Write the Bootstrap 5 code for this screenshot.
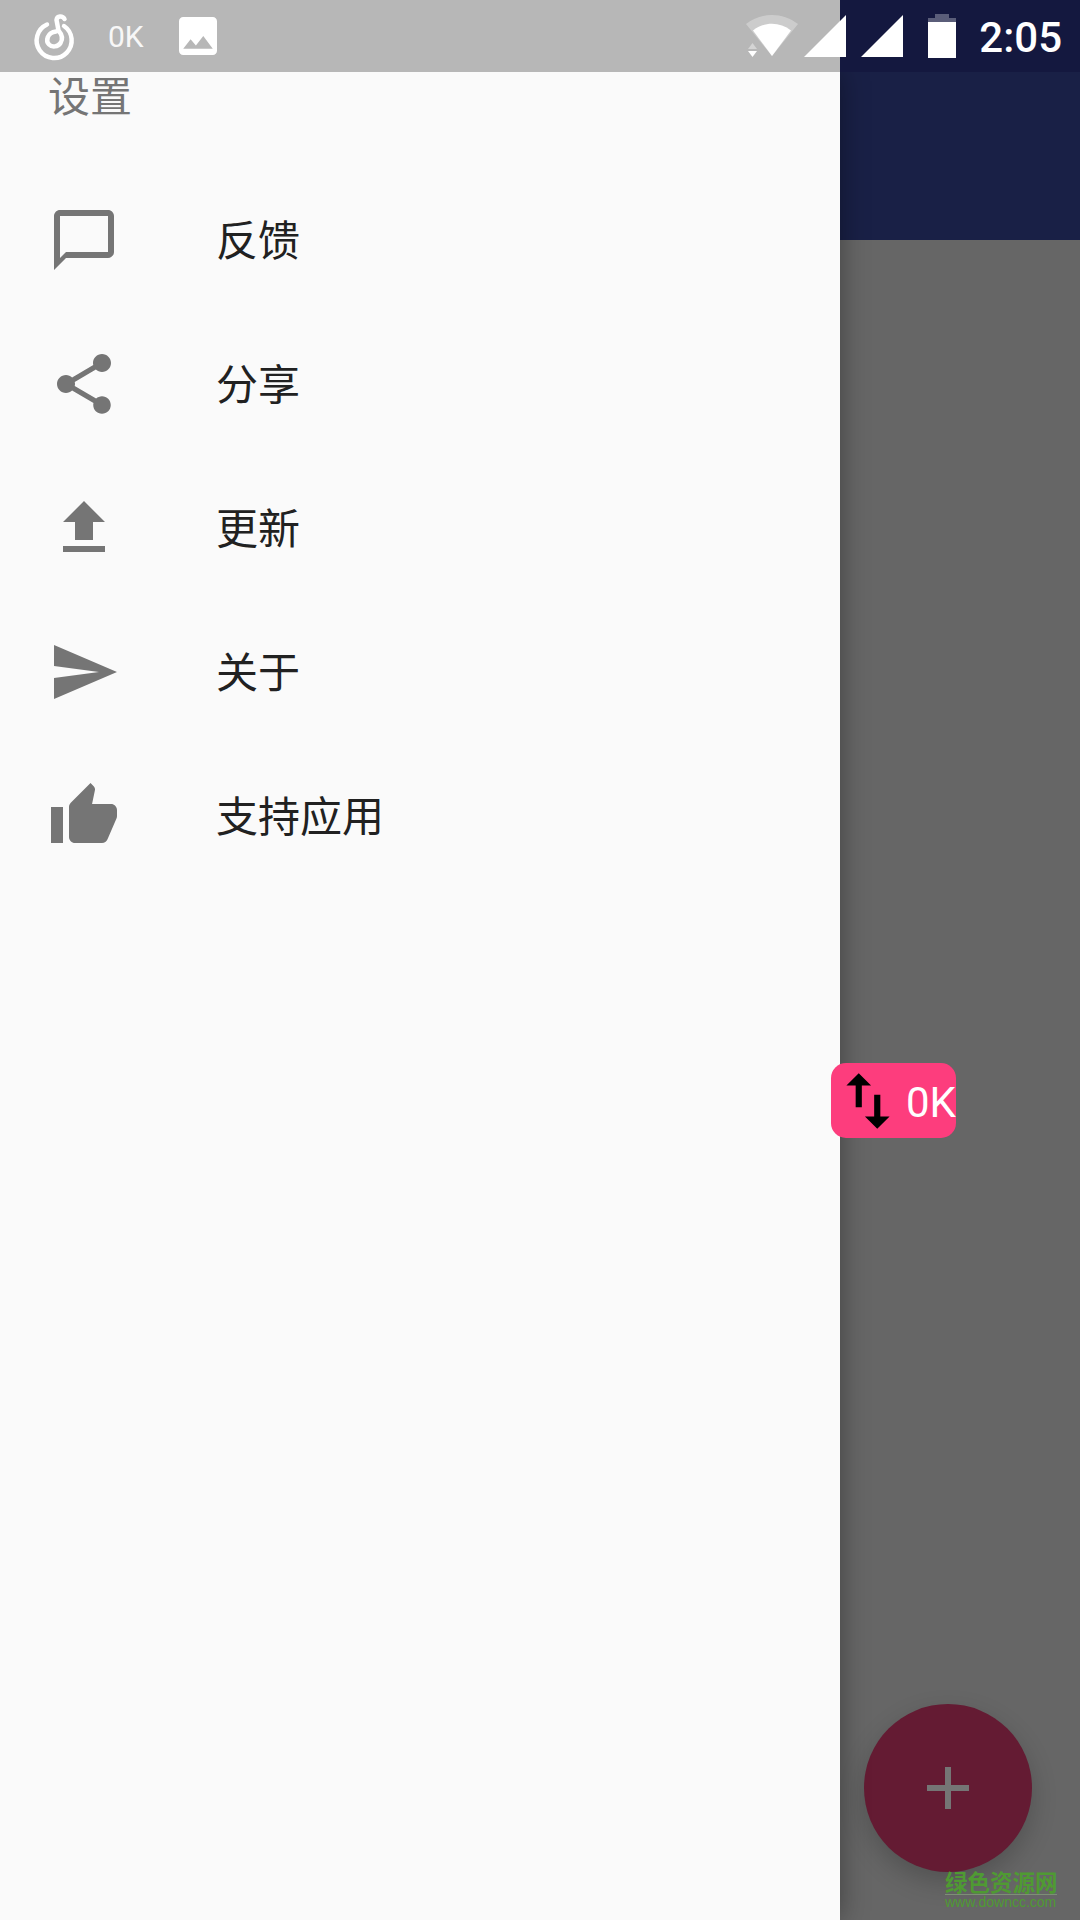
<!DOCTYPE html>
<html lang="zh-CN">
<head>
  <meta charset="UTF-8">
  <meta name="viewport" content="width=device-width, initial-scale=1.0">
  <title>设置</title>
  <link href="https://cdn.jsdelivr.net/npm/bootstrap@5.3.3/dist/css/bootstrap.min.css" rel="stylesheet">
  <style>
    html, body {
      width: 1080px;
      height: 1920px;
      overflow: hidden;
    }

    body {
      font-family: Roboto, "Noto Sans CJK SC", sans-serif;
      background: #666;
    }

    .app-frame {
      width: 1080px;
      height: 1920px;
    }

    /* status bar runs over both the drawer scrim and the dark toolbar */
    .status-strip {
      height: 72px;
      padding: 0 18px 0 26px;
      color: #fff;
      background: linear-gradient(to right, #b7b7b7 840px, #14183f 840px);
    }

    .status-ok {
      margin: 2px 35px 0 26px;
      font-size: 30px;
      font-weight: 400;
      line-height: 1;
      opacity: .9;
    }

    .status-image {
      width: 38px;
      height: 38px;
    }

    .status-time {
      margin-left: 23px;
      padding-top: 3px;
      font-size: 42px;
      font-weight: 500;
      line-height: 1;
    }

    .sig-first { margin-left: 6px; }
    .sig-second { margin-left: 15px; }
    .batt-icon { margin-left: 25px; }

    .main-row {
      overflow: hidden;
    }

    .drawer-panel {
      width: 840px;
      background: #fafafa;
      box-shadow: 0 0 26px rgba(0, 0, 0, .38);
      z-index: 1;
    }

    .drawer-title {
      height: 48px;
      margin: 0 0 48px;
      padding: 2px 0 0 48px;
      font-size: 42px;
      font-weight: 400;
      line-height: 48px;
      color: #757575;
    }

    .menu-row {
      height: 144px;
      padding-left: 48px;
      font-size: 42px;
      color: #212121;
    }

    .menu-row span {
      padding-top: 3px;
    }

    .menu-row svg {
      width: 72px;
      height: 72px;
      margin-right: 96px;
      fill: #757575;
    }

    .toolbar-block {
      height: 168px;
      background: #192046;
    }

    .scrim-block {
      background: #666;
    }

    .speed-chip {
      position: absolute;
      left: 831px;
      top: 1063px;
      width: 125px;
      height: 75px;
      z-index: 2;
      overflow: hidden;
      border-radius: 15px;
      color: #fff;
      background: #fd3d7d;
    }

    .speed-chip svg {
      width: 74px;
      height: 74px;
      flex: none;
    }

    .speed-chip span {
      margin-left: 1px;
      padding-top: 4px;
      font-size: 42px;
      font-weight: 400;
      line-height: 1;
      white-space: nowrap;
    }

    .fab-add {
      position: absolute;
      left: 864px;
      top: 1704px;
      width: 168px;
      height: 168px;
      border-radius: 50%;
      background: #641b33;
      box-shadow: 0 10px 26px rgba(0, 0, 0, .2);
    }

    .site-mark {
      position: absolute;
      left: 945px;
      top: 1869px;
      width: 112px;
      color: #4f9a33;
      z-index: 3;
    }

    .site-mark-name {
      font-size: 22.5px;
      font-weight: 700;
      line-height: 25px;
      white-space: nowrap;
      font-family: "Noto Sans CJK SC", sans-serif;
    }

    .site-mark-url {
      border-top: 1px solid #7d8f76;
      font-family: "Liberation Sans", sans-serif;
      font-size: 14px;
      line-height: 15px;
      white-space: nowrap;
    }
  </style>
</head>
<body>

  <div class="app-frame d-flex flex-column position-relative">

    <div class="status-strip d-flex align-items-center flex-shrink-0">
      <svg width="56" height="54" viewBox="0 -1 56 54" fill="none" stroke="#fff" stroke-width="4.500" stroke-linecap="round">
        <path d="M21 14.500A17.500 17.500 0 1 0 38 16"/>
        <path d="M38.500 9C36.500 5.500 31 5.500 30.500 10L32.500 20.500C36 24.500 37 29 34.500 33C32 37 26 37.500 23 34.500C19.500 31 21 22.500 30 21.500"/>
      </svg>
      <span class="status-ok">0K</span>
      <svg class="status-image" viewBox="3 3 18 18" fill="#fff">
        <path d="M21 19V5c0-1.100-.9-2-2-2H5c-1.100 0-2 .9-2 2v14c0 1.100.9 2 2 2h14c1.100 0 2-.9 2-2zM8.500 13.500l2.500 3.010L14.500 12l4.500 6H5l3.500-4.500z"/>
      </svg>

      <svg class="ms-auto" width="52" height="42" viewBox="0 0 52 42">
        <path d="M0 9C16 -3 36 -3 52 9L26 41z" fill="#fff" fill-opacity=".3"/>
        <path d="M7 15.500C18 6.500 34 6.500 45 15.500L26 41z" fill="#fff"/>
        <path d="M6.500 28L11 34H2z" fill="#fff" fill-opacity=".4"/>
        <path d="M2 36h9L6.500 42z" fill="#fff"/>
      </svg>
      <svg class="sig-first" width="42" height="42" viewBox="0 0 42 42"><path d="M0 42L42 0V42z" fill="#fff"/></svg>
      <svg class="sig-second" width="42" height="42" viewBox="0 0 42 42"><path d="M0 42L42 0V42z" fill="#fff"/></svg>
      <svg class="batt-icon" width="28" height="44" viewBox="0 0 28 44">
        <path d="M7 0h14v4h7v8H0V4h7z" fill="#fff" fill-opacity=".3"/>
        <path d="M0 8h28v36H0z" fill="#fff"/>
      </svg>
      <span class="status-time">2:05</span>
    </div>

    <div class="main-row d-flex flex-grow-1">
      <nav class="drawer-panel flex-shrink-0 position-relative">
        <h2 class="drawer-title">设置</h2>
        <ul class="list-unstyled m-0">
          <li class="menu-row d-flex align-items-center">
            <svg viewBox="0 0 24 24"><path d="M20 2H4c-1.100 0-2 .9-2 2v18l4-4h14c1.100 0 2-.9 2-2V4c0-1.100-.9-2-2-2zm0 14H6l-2 2V4h16v12z"/></svg>
            <span>反馈</span>
          </li>
          <li class="menu-row d-flex align-items-center">
            <svg viewBox="0 0 24 24"><path d="M18 16.080c-.76 0-1.440.3-1.960.77L8.910 12.700c.05-.23.09-.46.09-.7s-.04-.47-.09-.7l7.050-4.110c.54.5 1.250.81 2.040.81 1.660 0 3-1.340 3-3s-1.340-3-3-3-3 1.340-3 3c0 .24.04.47.09.7L8.040 9.810C7.500 9.310 6.790 9 6 9c-1.660 0-3 1.340-3 3s1.340 3 3 3c.79 0 1.500-.31 2.040-.81l7.120 4.160c-.05.21-.08.43-.08.65 0 1.610 1.310 2.920 2.920 2.920 1.610 0 2.920-1.310 2.920-2.920s-1.310-2.920-2.920-2.920z"/></svg>
            <span>分享</span>
          </li>
          <li class="menu-row d-flex align-items-center">
            <svg viewBox="0 0 24 24"><path d="M9 16h6v-6h4l-7-7-7 7h4zm-4 2h14v2H5z"/></svg>
            <span>更新</span>
          </li>
          <li class="menu-row d-flex align-items-center">
            <svg viewBox="0 0 24 24"><path d="M2.010 21L23 12 2.010 3 2 10l15 2-15 2z"/></svg>
            <span>关于</span>
          </li>
          <li class="menu-row d-flex align-items-center">
            <svg viewBox="0 0 24 24"><path d="M1 21h4V9H1v12zm22-11c0-1.100-.9-2-2-2h-6.310l.95-4.570.03-.32c0-.41-.17-.79-.44-1.060L14.170 1 7.590 7.590C7.220 7.950 7 8.450 7 9v10c0 1.100.9 2 2 2h9c.83 0 1.540-.5 1.840-1.220l3.020-7.050c.09-.23.14-.47.14-.73v-2z"/></svg>
            <span>支持应用</span>
          </li>
        </ul>
      </nav>

      <div class="d-flex flex-column flex-grow-1">
        <div class="toolbar-block"></div>
        <div class="scrim-block flex-grow-1"></div>
      </div>
    </div>

    <div class="speed-chip d-flex align-items-center">
      <svg viewBox="0 0 24 24"><path d="M16 17.010V10h-2v7.010h-3L15 21l4-3.990h-3zM9 3L5 6.990h3V14h2V6.990h3L9 3z"/></svg>
      <span>0K</span>
    </div>

    <div class="fab-add d-flex align-items-center justify-content-center">
      <svg width="42" height="42" viewBox="0 0 42 42"><path d="M18 0h6v18h18v6H24v18h-6V24H0v-6h18z" fill="#757575"/></svg>
    </div>

    <div class="site-mark">
      <div class="site-mark-name">绿色资源网</div>
      <div class="site-mark-url">www.downcc.com</div>
    </div>
  </div>

  <script src="https://cdn.jsdelivr.net/npm/bootstrap@5.3.3/dist/js/bootstrap.bundle.min.js"></script>
</body>
</html>
